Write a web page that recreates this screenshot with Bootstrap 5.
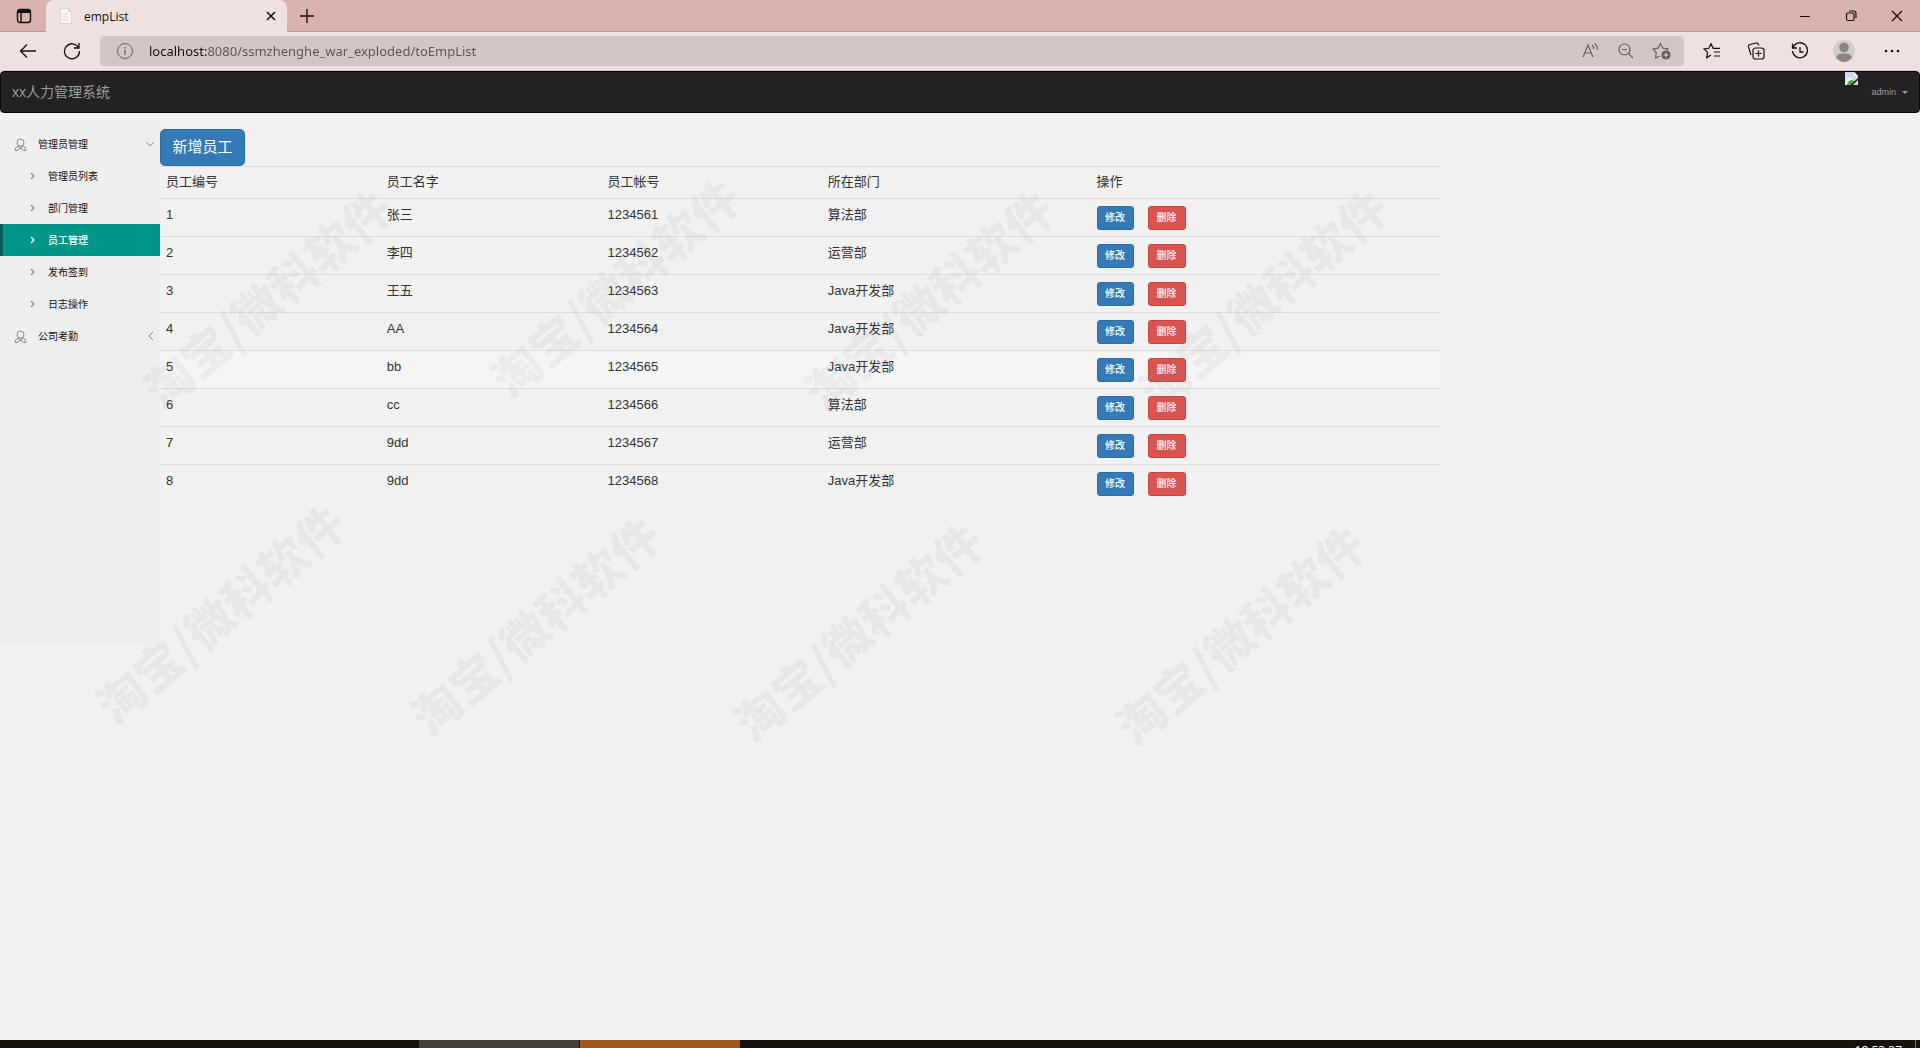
<!DOCTYPE html>
<html lang="zh-CN">
<head>
<meta charset="utf-8">
<meta name="viewport" content="width=device-width, initial-scale=1">
<title>empList</title>
<link rel="stylesheet" href="https://cdn.jsdelivr.net/npm/bootstrap@5.3.0/dist/css/bootstrap.min.css">
<style>
body{background:#f1f1f1;font-family:"Liberation Sans","Noto Sans CJK SC",sans-serif;font-size:13px;line-height:19px;color:#333;min-height:100vh;overflow:hidden}
svg{display:block;flex:none;fill:none;stroke:currentColor}
button{color:inherit}
.chrome{font-family:"Open Sans","Noto Sans",sans-serif;color:#111}
.plain{background:none;border:0;padding:0;display:flex;align-items:center;justify-content:center;flex:none}
.tabstrip{background:#d9b2ae;height:32px;border-bottom:1px solid #c09490}
.ws{width:46px;padding-left:2px}
.tab-open{width:241px;height:32px;background:#f0e1e1;border-radius:8px 8px 0 0;padding:0 9px 0 13px;font-size:12px;z-index:1}
.tab-open .page-icon{margin-right:11px;color:#dcd3d3;fill:#faf6f6}
.winbtn{width:46px;height:32px}
.toolbar-row{background:#f0e1e1;height:39px;border-bottom:1px solid #d5c4c4;padding:0 6px}
.tool{width:44px;height:38px}
.address{background:#d5c6c6;height:30px;border-radius:4px;padding:0 4px 0 16px;margin:0 6px;color:#6a6060}
.address input{background:linear-gradient(90deg,#111 58px,#5b5454 58px);background-clip:text;-webkit-background-clip:text;color:transparent;border:0;outline:0;font-size:13px;font-family:"Noto Sans",sans-serif;padding:0;margin-left:15px}
.address .plain{width:36px}
.topbar{background:#222;border:1px solid #080808;border-radius:4px;height:42px;color:#9d9d9d;padding:0 11px}
.topbar a{color:#9d9d9d;text-decoration:none}
.brand{font-size:14px;line-height:20px}
.user{font-size:9px;margin-left:12px}
.user::after{margin-left:6px;border-top-width:3px;border-left-width:3px;border-right-width:3px;vertical-align:1px}
.pic{align-self:flex-start}
.layout{margin-top:9px}
.side{width:160px;height:522px;background:#eee;font-size:10px;padding-top:6px}
.side a{display:flex;align-items:center;height:32px;color:#111;text-decoration:none}
.side .parent{padding:0 5px 0 14px}
.side .parent span{flex:1;margin-left:11px}
.side .child{padding-left:26px;border-left:3px solid transparent}
.side .child svg{margin-right:11px;color:#888}
.side .child.on{background:#009688;border-color:#0c5c54;color:#fff;font-weight:500}
.side .child.on svg{color:#fff}
.side .parent svg{color:#888}
.listing{width:1280px;margin-top:7px}
.add{background:#337ab7;border:1px solid #2e6da4;border-radius:5px;color:#fff;font-size:15px;line-height:21px;padding:6px 11px 8px;width:85px;height:37px}
.emp{table-layout:fixed;margin:0;color:#333}
.emp th,.emp td{background:none;border:0;border-top:1px solid #ddd;padding:6px;font-weight:400;vertical-align:top;color:#333;box-shadow:none;height:38px}
.emp th{height:32px;padding-top:5px}
.emp tr.hot td{background:#f5f5f5}
.emp td.ops{padding:7px 6px 0}
.ops .d-flex{gap:14px}
.op{border-radius:3px;color:#fff;font-size:10px;line-height:14px;padding:0 0 1px;border:1px solid #2e6da4;background:#337ab7;height:24px;width:37px;white-space:nowrap;font-weight:500}
.op.del{background:#d9534f;border-color:#d43f3a;width:38px}
.mark-layer{position:absolute;inset:0;pointer-events:none;overflow:hidden}
.wm{position:absolute;font:900 48px/48px "Noto Sans CJK SC",sans-serif;color:rgba(140,140,140,.09);white-space:nowrap;transform:translate(-50%,-50%) rotate(-40deg)}
.taskbar{position:absolute;left:0;right:0;bottom:0;height:8px;background:#17110b;overflow:hidden;display:flex}
.lead-gap{width:419px}.task{width:160px;margin-right:1px}.t1{background:#464138}.t2{background:#a2591d}
.clock{margin-left:auto;color:#fff;font:12px/16px "Open Sans",sans-serif;padding:3px 13px 0 0}
.peek{border-left:1px solid #777;width:5px}
</style>
<script src="https://cdn.jsdelivr.net/npm/bootstrap@5.3.0/dist/js/bootstrap.bundle.min.js"></script>
</head>
<body class="position-relative">
<header class="chrome">
  <div class="tabstrip d-flex">
    <button class="plain ws" aria-label="标签页操作"><svg width="16" height="16" stroke-width="1.4"><rect x="1.5" y="1.5" width="13" height="13" rx="2.5"/><path d="M1.500 3.500h13" stroke-width="3"/><path d="M5 5v9"/></svg></button>
    <div class="tab-open d-flex align-items-center">
      <svg class="page-icon" width="14" height="16"><path d="M1.500.5h8l3 3v12h-11zM9.500.5v3h3"/><path d="M4 6h5M4 9h5M4 12h5"/></svg>
      <span class="flex-grow-1">empList</span>
      <button class="plain" aria-label="关闭标签页"><svg width="14" height="14" stroke-width="1.500"><path d="M3 3l8 8M11 3l-8 8"/></svg></button>
    </div>
    <button class="plain ms-2 ps-1" aria-label="新建标签页"><svg width="16" height="16" stroke-width="1.300"><path d="M8 1v14M1 8h14"/></svg></button>
    <div class="ms-auto d-flex">
      <button class="plain winbtn" aria-label="最小化"><svg width="12" height="12"><path d="M1 6.500h10"/></svg></button>
      <button class="plain winbtn" aria-label="还原"><svg width="12" height="12" stroke-width="1.200"><rect x="1.500" y="3" width="7.500" height="7.500" rx="1.500"/><path d="M4 1h4.500a2.500 2.500 0 0 1 2.500 2.500v4.500"/></svg></button>
      <button class="plain winbtn" aria-label="关闭"><svg width="12" height="12" stroke-width="1.200"><path d="M1 1l10 10M11 1l-10 10"/></svg></button>
    </div>
  </div>
  <div class="toolbar-row d-flex align-items-center">
    <button class="plain tool" aria-label="返回"><svg width="18" height="16" stroke-width="1.300"><path d="M17 8H2M8 1.500L1.500 8 8 14.500"/></svg></button>
    <button class="plain tool" aria-label="刷新"><svg width="18" height="18" stroke-width="1.300"><path d="M15.500 5.500A7.500 7.500 0 1 0 16.500 9M16 1v5h-5"/></svg></button>
    <div class="address d-flex align-items-center flex-grow-1">
      <svg width="18" height="18"><circle cx="9" cy="9" r="7.500"/><path d="M9 8v5M9 5v1.500" stroke-width="1.300"/></svg>
      <input class="flex-grow-1" type="text" aria-label="地址" value="localhost:8080/ssmzhenghe_war_exploded/toEmpList">
      <button class="plain" aria-label="大声朗读"><svg width="18" height="18" stroke-width="1.200"><path d="M2 15L7 3l5 12M4 11h6M11 3q2 1.500 1.500 4M13.500 1.500q3.500 2.500 2.500 6.500"/></svg></button>
      <button class="plain" aria-label="缩小"><svg width="18" height="18" stroke-width="1.200"><circle cx="7.500" cy="7.500" r="5.500"/><path d="M11.500 11.500L16 16M5 7.500h5"/></svg></button>
      <button class="plain" aria-label="收藏此页"><svg width="20" height="20" stroke-width="1.200"><path d="M8 15l-4.500 2 .8-5.300L1 8l5-.8L8.500 2.500 11 7.200l5 .8-1.500 1.500"/><circle cx="14" cy="14" r="4" fill="#5b5454"/><path d="M14 11.500v5M11.500 14h5" stroke="#e5dada"/></svg></button>
    </div>
    <button class="plain tool" aria-label="收藏夹"><svg width="18" height="18" stroke-width="1.200"><path d="M8 13l-4.300 2.700.9-5L1 7l4.800-.7L8 1.800l2.200 4.500H17M11 10h6M11 14h6"/></svg></button>
    <button class="plain tool" aria-label="集锦"><svg width="18" height="18" stroke-width="1.200"><rect x="6" y="6" width="11" height="11" rx="2.500"/><path d="M11.500 8.500v6M8.500 11.500h6M4 13L1.500 5q-.5-2 1.500-2.500l6-1.500q1.500-.5 2.500 1.500l.5 1"/></svg></button>
    <button class="plain tool" aria-label="历史记录"><svg width="18" height="18" stroke-width="1.300"><path d="M2 5.500A7.500 7.500 0 1 1 1.500 9M1.500 1.500v4.500h4.500M9 5v5h3.500"/></svg></button>
    <button class="plain tool" aria-label="个人资料"><svg width="22" height="22"><g stroke="none"><circle cx="11" cy="11" r="11" fill="#d2cccb"/><circle cx="11" cy="7.500" r="4.800" fill="#8b8583"/><path d="M3.500 18q0-4.500 5-4.500h5q5 0 5 4.500-3.500 4-7.500 4t-7.500-4z" fill="#8b8583"/></g></svg></button>
    <button class="plain tool ms-1" aria-label="更多"><svg width="16" height="4"><g fill="currentColor" stroke="none"><circle cx="2" cy="2" r="1.300"/><circle cx="8" cy="2" r="1.300"/><circle cx="14" cy="2" r="1.300"/></g></svg></button>
  </div>
</header>
<nav class="topbar d-flex align-items-center">
  <a class="brand me-auto" href="#">xx人力管理系统</a>
  <svg class="pic" width="14" height="14"><g stroke="none"><path d="M0 0h9l4 4v9H0z" fill="#c8dcf6"/><path d="M9 0v4h4z" fill="#fff"/><path d="M1 9q2-6 5-3l2 2-4 5H0z" fill="#eef5ff"/><path d="M2 13q1-5 5-5l2 1-4 4z" fill="#43b02a"/><path d="M5 13l8-7v2l-5 5z" fill="#222"/></g></svg>
  <a class="user dropdown-toggle" href="#">admin</a>
</nav>
<div class="layout d-flex align-items-start">
  <aside class="side flex-shrink-0">
    <a class="parent" href="#"><svg width="13" height="13"><circle cx="6.500" cy="4.500" r="3.500"/><path d="M1 12.500q0-3.500 3.500-4.500l2 2.500L8.500 8q3.500 1 3.500 4.500H9.500L6.500 9 3.500 12.500z"/></svg><span>管理员管理</span><svg width="10" height="8"><path d="M1 2l4 4 4-4"/></svg></a>
    <a class="child" href="#"><svg width="8" height="8" stroke-width="1.300"><path d="M2 1l3 3-3 3"/></svg>管理员列表</a>
    <a class="child" href="#"><svg width="8" height="8" stroke-width="1.300"><path d="M2 1l3 3-3 3"/></svg>部门管理</a>
    <a class="child on" href="#"><svg width="8" height="8" stroke-width="1.300"><path d="M2 1l3 3-3 3"/></svg>员工管理</a>
    <a class="child" href="#"><svg width="8" height="8" stroke-width="1.300"><path d="M2 1l3 3-3 3"/></svg>发布签到</a>
    <a class="child" href="#"><svg width="8" height="8" stroke-width="1.300"><path d="M2 1l3 3-3 3"/></svg>日志操作</a>
    <a class="parent" href="#"><svg width="13" height="13"><circle cx="6.500" cy="4.500" r="3.500"/><path d="M1 12.500q0-3.500 3.500-4.500l2 2.500L8.500 8q3.500 1 3.500 4.500H9.500L6.500 9 3.500 12.500z"/></svg><span>公司考勤</span><svg width="8" height="10"><path d="M6 1L2 5l4 4"/></svg></a>
  </aside>
  <main class="listing">
    <button class="add d-block">新增员工</button>
    <table class="table emp">
      <colgroup><col style="width:17.25%"><col style="width:17.25%"><col style="width:17.2%"><col style="width:21%"><col></colgroup>
      <thead><tr><th>员工编号</th><th>员工名字</th><th>员工帐号</th><th>所在部门</th><th>操作</th></tr></thead>
      <tbody>
      <tr><td>1</td><td>张三</td><td>1234561</td><td>算法部</td><td class="ops"><div class="d-flex"><button class="op">修改</button><button class="op del">删除</button></div></td></tr>
      <tr><td>2</td><td>李四</td><td>1234562</td><td>运营部</td><td class="ops"><div class="d-flex"><button class="op">修改</button><button class="op del">删除</button></div></td></tr>
      <tr><td>3</td><td>王五</td><td>1234563</td><td>Java开发部</td><td class="ops"><div class="d-flex"><button class="op">修改</button><button class="op del">删除</button></div></td></tr>
      <tr><td>4</td><td>AA</td><td>1234564</td><td>Java开发部</td><td class="ops"><div class="d-flex"><button class="op">修改</button><button class="op del">删除</button></div></td></tr>
      <tr class="hot"><td>5</td><td>bb</td><td>1234565</td><td>Java开发部</td><td class="ops"><div class="d-flex"><button class="op">修改</button><button class="op del">删除</button></div></td></tr>
      <tr><td>6</td><td>cc</td><td>1234566</td><td>算法部</td><td class="ops"><div class="d-flex"><button class="op">修改</button><button class="op del">删除</button></div></td></tr>
      <tr><td>7</td><td>9dd</td><td>1234567</td><td>运营部</td><td class="ops"><div class="d-flex"><button class="op">修改</button><button class="op del">删除</button></div></td></tr>
      <tr><td>8</td><td>9dd</td><td>1234568</td><td>Java开发部</td><td class="ops"><div class="d-flex"><button class="op">修改</button><button class="op del">删除</button></div></td></tr>
      </tbody>
    </table>
  </main>
</div>
<div class="mark-layer" aria-hidden="true">
  <span class="wm" style="left:266px;top:297px">淘宝/微科软件</span>
  <span class="wm" style="left:614px;top:286px">淘宝/微科软件</span>
  <span class="wm" style="left:928px;top:298px">淘宝/微科软件</span>
  <span class="wm" style="left:1262px;top:297px">淘宝/微科软件</span>
  <span class="wm" style="left:219px;top:612px">淘宝/微科软件</span>
  <span class="wm" style="left:534px;top:624px">淘宝/微科软件</span>
  <span class="wm" style="left:857px;top:630px">淘宝/微科软件</span>
  <span class="wm" style="left:1239px;top:633px">淘宝/微科软件</span>
</div>
<footer class="taskbar"><div class="lead-gap"></div><div class="task t1"></div><div class="task t2"></div><div class="clock">18:53:37</div><div class="peek"></div></footer>
</body>
</html>
